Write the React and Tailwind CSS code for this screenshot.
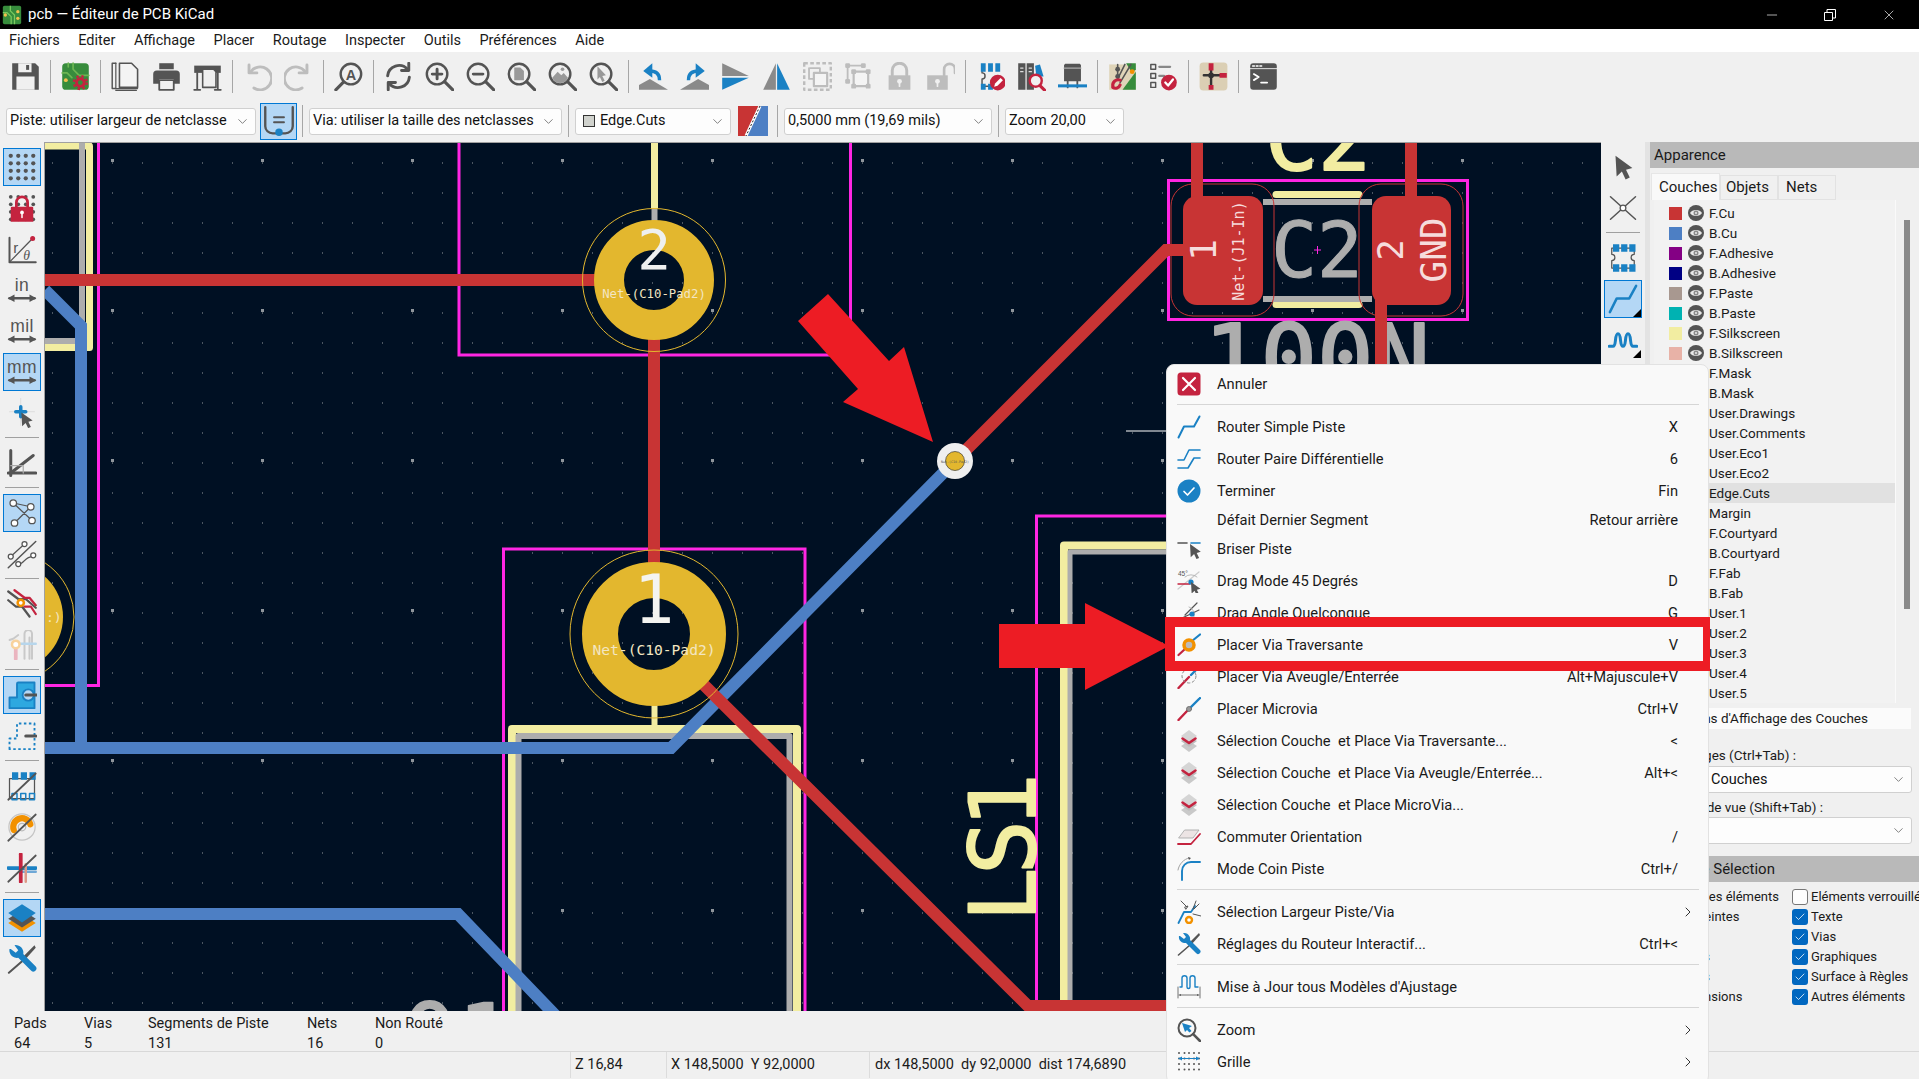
import { ChevronDown, ChevronRight, Minus, X, Check } from 'lucide-react';

const D = '#545454';
const B = '#1a81c4';
const R = '#c4233f';
const O = '#f29100';
const G = '#bdbdbd';
const MONO = 'DejaVu Sans Mono';

function Ic({ children, size = 30 }) {
  return (
    <svg width={size} height={size} viewBox="0 0 24 24" fill="none" strokeLinecap="round" strokeLinejoin="round">
      {children}
    </svg>
  );
}

const lens = (
  <>
    <circle cx="10" cy="10" r="8.5" stroke={D} strokeWidth="2" />
    <path d="M16.2 16.2 23 23" stroke={D} strokeWidth="2.6" />
  </>
);

const cursor = (x, y, s = 1, c = D) => (
  <path transform={`translate(${x} ${y}) scale(${s})`} d="M0 0 9 6.5 5.6 7.4 7.6 11.6 5.4 12.6 3.4 8.4 0.6 11z" fill={c} />
);

const dots = [3, 9, 15, 21].flatMap((x) => [3, 9, 15, 21].map((y) => [x, y]));

const icons = {
  save: (
    <>
      <path d="M1 1h19l3 3v19H1z" fill={D} />
      <path d="M6 1h11v7.500H6z" fill="#f0f0f0" />
      <path d="M12.500 2.500h2.500v4h-2.500z" fill={D} />
      <path d="M4.500 12h15v11h-15z" fill="#f0f0f0" />
    </>
  ),
  setup: (
    <>
      <rect x="1" y="1" width="22" height="22" rx="3" fill="#378c3c" />
      <path d="M10 1v5l5 5h8M1 9h4l4 4M6 1v3" stroke="#6cb552" strokeWidth="1.4" />
      <circle cx="4" cy="15" r="1.6" fill="#f2c14e" />
      <circle cx="16" cy="17" r="3.200" stroke={R} strokeWidth="2.400" fill="#378c3c" />
      <circle cx="16" cy="17" r="5.300" stroke={R} strokeWidth="2" strokeDasharray="2 2.200" strokeLinecap="butt" />
    </>
  ),
  page: (
    <>
      <path d="M1 1v21M1 1h3M1 22h3" stroke={D} strokeWidth="1.2" />
      <path d="M4 22h18M4 23.500h17" stroke={D} strokeWidth="1" />
      <path d="M7 1h10l5 5v15H7z" stroke={D} strokeWidth="1.300" fill="#f4f4f4" />
      <path d="M4 1v21" stroke={D} strokeWidth="1" />
    </>
  ),
  print: (
    <>
      <path d="M6 1h12v5H6z" fill={D} />
      <path d="M1 10a3 3 0 0 1 3-3h16a3 3 0 0 1 3 3v8h-5v-4H6v4H1z" fill={D} />
      <path d="M6 15h12v8H6z" fill="#f0f0f0" stroke={D} strokeWidth="1.500" />
    </>
  ),
  plot: (
    <>
      <path d="M1 3h22v6H1z" fill={D} />
      <path d="M3.500 9v14M20.500 9v14M1 23h5M18 23h5" stroke={D} strokeWidth="1.500" />
      <path d="M8 6h9l2 2v13H8z" fill="#f0f0f0" stroke={D} strokeWidth="1.300" />
    </>
  ),
  undo: (
    <>
      <path d="M6.500 8A9.500 9.500 0 1 1 9 21.500" stroke={G} strokeWidth="2.400" />
      <path d="M5 2.500V9h6.500" stroke={G} strokeWidth="2.400" />
    </>
  ),
  redo: (
    <g transform="translate(24) scale(-1 1)">
      <path d="M6.500 8A9.500 9.500 0 1 1 9 21.500" stroke={G} strokeWidth="2.400" />
      <path d="M5 2.500V9h6.500" stroke={G} strokeWidth="2.400" />
    </g>
  ),
  find: (
    <>
      <circle cx="14" cy="10" r="8.500" stroke={D} strokeWidth="2" />
      <path d="M8 16.500 1.500 23" stroke={D} strokeWidth="2.600" />
      <text x="14" y="14.500" fontSize="12" fontWeight="700" textAnchor="middle" fill={D} fontFamily="Liberation Sans">A</text>
    </>
  ),
  refresh: (
    <g stroke={D} strokeWidth="2.400">
      <path d="M3 11.500A9.500 9.500 0 0 1 19.500 6" />
      <path d="M14.500 7H20.500V1" />
      <path d="M21 12.500A9.500 9.500 0 0 1 4.500 18" />
      <path d="M9.500 17H3.500V23" />
    </g>
  ),
  zoomIn: (
    <>
      {lens}
      <path d="M6 10h8M10 6v8" stroke={D} strokeWidth="2.400" />
    </>
  ),
  zoomOut: (
    <>
      {lens}
      <path d="M6 10h8" stroke={D} strokeWidth="2.400" />
    </>
  ),
  zoomFit: (
    <>
      {lens}
      <path d="M6 4.500h5l3 3V15H6z" fill="#999" />
    </>
  ),
  zoomObj: (
    <>
      {lens}
      <path d="M3.500 13 8 8l3 3 2-2 3.500 4a7 7 0 0 1-13 0z" fill="#999" />
      <circle cx="12" cy="6" r="1.500" fill="#999" />
    </>
  ),
  zoomSel: (
    <>
      {lens}
      <path d="M7 3.500 14 11l-3 .5 2 4-2 1-2-4-2 2z" fill="#999" />
    </>
  ),
  rotL: (
    <>
      <path d="M0 23V19L9 14 24 23z" fill="#8a8a8a" />
      <path d="M17 15C17 10 14 7.500 9 7.500" stroke={B} strokeWidth="2.800" strokeLinecap="butt" />
      <path d="M11 1 3.500 7.500 11 13z" fill={B} />
    </>
  ),
  rotR: (
    <>
      <path d="M24 19 15 14 0 23H24z" fill="#8a8a8a" />
      <path d="M7 15C7 10 10 7.500 15 7.500" stroke={B} strokeWidth="2.800" strokeLinecap="butt" />
      <path d="M13 1 20.500 7.500 13 13z" fill={B} />
    </>
  ),
  flip: (
    <>
      <path d="M1 1 23 11.500H1z" fill="#8a8a8a" />
      <path d="M1 13H23L1 23z" fill={B} />
    </>
  ),
  mirror: (
    <>
      <path d="M11.500 1V23H1z" fill="#8a8a8a" />
      <path d="M12.500 1 23 23H12.500z" fill={B} />
    </>
  ),
  group: (
    <>
      <path d="M1 1h22v22H1z" stroke={G} strokeWidth="2" strokeDasharray="3 2" strokeLinecap="butt" />
      <path d="M6 5h8v8" stroke={G} strokeWidth="1.500" />
      <path d="M5 5v9h4" stroke={G} strokeWidth="1.500" />
      <path d="M9 9h11v11H9z" fill="#f4f4f4" stroke={G} strokeWidth="1.800" />
    </>
  ),
  ungroup: (
    <>
      <path d="M3 3h13M3 3v13" stroke={G} strokeWidth="1.500" />
      <path d="M8 8h12v12H8z" fill="#f4f4f4" stroke={G} strokeWidth="1.800" />
      {[[3, 3], [16, 3], [3, 16], [8, 8], [20, 8], [8, 20], [20, 20]].map(([x, y]) => (
        <rect key={`${x}-${y}`} x={x - 2} y={y - 2} width="4" height="4" rx="1" fill={G} />
      ))}
    </>
  ),
  lock: (
    <>
      <path d="M6 11V7a6 6 0 0 1 12 0v4" stroke={G} strokeWidth="2.400" />
      <path d="M3 11h18v12H3z" fill={G} />
      <circle cx="12" cy="16" r="2" fill="#f0f0f0" />
      <path d="M12 17v3" stroke="#f0f0f0" strokeWidth="1.400" />
    </>
  ),
  unlock: (
    <>
      <path d="M15 11V6a4.500 4.500 0 0 1 9 0v3" stroke={G} strokeWidth="2.200" />
      <path d="M1 11h17v12H1z" fill={G} />
      <circle cx="9.500" cy="16" r="2" fill="#f0f0f0" />
      <path d="M9.500 17v3" stroke="#f0f0f0" strokeWidth="1.400" />
    </>
  ),
  boardSetup: (
    <>
      <path d="M5 4v5a2 2 0 0 1 0 5v6h6" stroke={D} strokeWidth="1.200" />
      <path d="M4 1h4v7H4zM10 1h4v7h-4zM16 1h4v7h-4zM4 18h4v5H4zM10 18h4v5h-4z" fill={B} />
      <circle cx="18" cy="17" r="6.500" fill={R} />
      <path d="M15 20.500l.8-2.800 4.500-4.500 2 2-4.500 4.500z" fill="#fff" />
    </>
  ),
  library: (
    <>
      <path d="M1 1h6v22H1zM8 1h6v22H8z" fill={D} />
      <path d="M3 5h2M3 8h2M10 5h2M10 8h2" stroke="#ddd" strokeWidth="1" />
      <path d="M15 3l4-1 3 10h-6z" fill={B} />
      <circle cx="15.500" cy="15.500" r="5" fill="#f0f0f0" stroke={R} strokeWidth="2" />
      <path d="M19 19.500 23 23.500" stroke={R} strokeWidth="2.600" />
    </>
  ),
  viewer: (
    <>
      <path d="M6 1.500h12l1 1V16H5V2.500z" fill={D} />
      <path d="M5 5h14" stroke="#aaa" strokeWidth="1" />
      <path d="M8 16v5M16 16v5" stroke={D} strokeWidth="1.500" />
      <path d="M0 18.500h24v2.500H0z" fill={B} />
    </>
  ),
  update: (
    <>
      <path d="M1 2h22v21H1z" fill="#dfd4b8" />
      <path d="M12 23 23 8V23z" fill="#378c3c" />
      <path d="M15 1 23 1V6L20 9z" fill="#378c3c" />
      <circle cx="20" cy="8" r="2" fill={O} />
      <path d="M8 2v9M14 2l-6 12M19 2l-9 15" stroke={D} strokeWidth="1.300" />
      <circle cx="8" cy="6" r="2" fill={D} />
      <circle cx="8" cy="12" r="2" fill={D} />
      <path d="M4 20a4.500 4.500 0 0 1 6-5" stroke={R} strokeWidth="2.600" />
      <path d="M10 19a4 4 0 0 1-6 2" stroke={R} strokeWidth="2.600" />
    </>
  ),
  drc: (
    <>
      <path d="M1.500 2h4v4h-4zM1.500 9.500h4v4h-4zM1.500 17h4v4h-4z" stroke={D} strokeWidth="1.200" />
      <path d="M8.500 4h9M8.500 11.500h4" stroke="#888" strokeWidth="1.800" />
      <circle cx="16.500" cy="17" r="6.500" fill={R} />
      <path d="M13.500 17l2.300 2.500 4-5" stroke="#fff" strokeWidth="1.900" />
    </>
  ),
  schem: (
    <>
      <rect x="0.500" y="0.500" width="23" height="23" rx="3" fill="#dbcfb4" />
      <path d="M10 6v14M10 11h9M4 11h6" stroke="#333" strokeWidth="2" />
      <path d="M8 1h4v6H8zM8 19h4v4H8zM17 9h6v4h-6z" fill={R} />
      <circle cx="10" cy="11" r="2.400" fill="#333" />
    </>
  ),
  term: (
    <>
      <rect x="1" y="1" width="22" height="22" rx="2.500" fill={D} />
      <path d="M1 5.500h22" stroke="#fff" strokeWidth="0.700" />
      <path d="M3 3.300h1.500M6 3.300h1.500M9 3.300h1.500" stroke="#fff" strokeWidth="1.200" />
      <path d="M4 10l4 2.500L4 15M10 17h5" stroke="#fff" strokeWidth="1.500" />
    </>
  ),
  gridPts: (
    <>
      {dots.map(([x, y]) => (
        <circle key={`${x}-${y}`} cx={x} cy={y} r="1.700" fill={D} />
      ))}
    </>
  ),
  gridLock: (
    <>
      {dots.map(([x, y]) => (
        <circle key={`${x}-${y}`} cx={x} cy={y} r="1.500" fill={D} />
      ))}
      <path d="M7.500 12V7.500a4.500 4.500 0 0 1 9 0V12" stroke={R} strokeWidth="2.200" />
      <path d="M4 11h16a1 1 0 0 1 1 1v11H3V12a1 1 0 0 1 1-1z" fill={R} />
      <circle cx="12" cy="15.500" r="1.500" fill="#fff" />
      <path d="M12 16v3.500" stroke="#fff" strokeWidth="1.200" />
    </>
  ),
  polar: (
    <>
      <path d="M2 3v19.500h21" stroke={D} strokeWidth="1.600" />
      <path d="M2 22.500 20 4" stroke={D} strokeWidth="1" />
      <circle cx="20.500" cy="3.500" r="2" fill={R} />
      <text x="5" y="15" fontSize="12" fill={D} fontFamily="Liberation Sans">r</text>
      <text x="13" y="21" fontSize="11" fontStyle="italic" fill={D} fontFamily="Liberation Serif">θ</text>
    </>
  ),
  axes: (
    <>
      <path d="M3 2v20M1 20h22" stroke={D} strokeWidth="2.400" />
      <path d="M3 20 21 6" stroke={D} strokeWidth="2.400" />
      <path d="M3 14h10v6" stroke="#aaa" strokeWidth="1" />
    </>
  ),
  crosshair: (
    <>
      <path d="M2 11h20M11 0v22" stroke="#ddd" strokeWidth="0.800" />
      <path d="M7 11h8M11 7v8" stroke={B} strokeWidth="2.800" />
      {cursor(11.500, 11.500, 1)}
    </>
  ),
  ratsnest: (
    <>
      <path d="M5 4 19 7M5 4 20 18M19 7 6 20" stroke={D} strokeWidth="1" />
      {[[5, 4], [19, 7], [20, 18], [6, 20]].map(([x, y]) => (
        <circle key={x} cx={x} cy={y} r="2.600" fill="#fff" stroke={D} strokeWidth="1" />
      ))}
    </>
  ),
  curved: (
    <>
      <path d="M1 23 23 2" stroke={D} strokeWidth="1.200" />
      <path d="M3 14 14 4" stroke={D} strokeWidth="1" />
      <path d="M9 20c6 0 4-6 12-6" stroke={D} strokeWidth="1" />
      {[[3, 14], [14, 4], [9, 20], [21, 13]].map(([x, y]) => (
        <circle key={x} cx={x} cy={y} r="2" fill="#fff" stroke={D} strokeWidth="1" />
      ))}
    </>
  ),
  netColors: (
    <>
      <path d="M1 2 9 8h6l8 7" stroke={D} strokeWidth="1.800" />
      <path d="M6 1l8 6h4l5 6" stroke={R} strokeWidth="1.800" />
      <path d="M1 9 7 14h5l6 8" stroke={D} strokeWidth="1.800" />
      <path d="M14 14h5l4 6" stroke={R} strokeWidth="1.800" />
      <circle cx="11" cy="11" r="2.500" fill="#fff" stroke={O} strokeWidth="2" />
    </>
  ),
  viasOn: (
    <>
      <path d="M14 23V3a3 3 0 0 1 6 0v20M18 23V6" stroke="#c9c9c9" strokeWidth="1.600" />
      <path d="M2 8l3-1 4-3" stroke="#c9c9c9" strokeWidth="1.500" />
      <path d="M10 11h13" stroke="#b7d6ec" strokeWidth="2" />
      <path d="M7 14v9" stroke="#eab4bf" strokeWidth="3" />
      <circle cx="7" cy="11.500" r="3" fill="#fff" stroke="#f8d29c" strokeWidth="2" />
    </>
  ),
  padFill: (
    <>
      <path d="M2 22.500V14h6V3a1 1 0 0 1 1-1h13v20.500z" fill="#2ea8e0" stroke={B} strokeWidth="1.500" />
      <circle cx="17" cy="12" r="4.500" fill="#b4d7f5" stroke={B} strokeWidth="1.500" />
      <path d="M15 12h9" stroke={D} strokeWidth="2.400" />
    </>
  ),
  padOut: (
    <>
      <path d="M2 22.500V14h6V2h14v20.500z" stroke={B} strokeWidth="1.500" strokeDasharray="2 2" strokeLinecap="butt" />
      <path d="M15 12h8" stroke={D} strokeWidth="2.400" />
    </>
  ),
  fpHidden: (
    <>
      <path d="M2 6h20v16H2z" stroke={D} strokeWidth="1" />
      <path d="M4 1h5v6H4zM11 1h5v6h-5zM18 1h5v6h-5z" fill={B} />
      <path d="M4 18h4v5H4zM11 18h4v5h-4zM18 18h4v5h-4z" stroke={B} strokeWidth="1.200" />
      <path d="M1 23 23 2" stroke={D} strokeWidth="1.400" />
    </>
  ),
  viaHidden: (
    <>
      <circle cx="12" cy="12" r="10.500" stroke="#c5c5c5" strokeWidth="1" />
      <circle cx="12" cy="12" r="7" stroke={O} strokeWidth="5" fill="none" strokeDasharray="22 40" transform="rotate(-200 12 12)" />
      <circle cx="12" cy="12" r="3" stroke="#bbb" strokeWidth="1" />
      <path d="M1 23 23 2" stroke={D} strokeWidth="1.400" />
    </>
  ),
  traceHidden: (
    <>
      <path d="M1 12h22" stroke={B} strokeWidth="3" />
      <path d="M12 15h11" stroke="#6fa8d6" strokeWidth="2" />
      <path d="M11 1v22" stroke={R} strokeWidth="3" />
      <path d="M15 9v14" stroke="#d98" strokeWidth="2" />
      <path d="M1 23 23 2" stroke={D} strokeWidth="1.400" />
    </>
  ),
  layers: (
    <>
      <path d="M12 9 23 16 12 23 1 16z" fill={O} />
      <path d="M12 5.500 23 12.500 12 19.500 1 12.500z" fill={D} />
      <path d="M12 1 23 8 12 15.500 1 8z" fill={B} />
    </>
  ),
  tools: (
    <>
      <path d="M22 1l1 2-9 10-2-2z" fill={D} />
      <path d="M13 13 1.500 23" stroke={D} strokeWidth="1.600" />
      <path d="M3 4l4 3 2-2-3-4a6 6 0 0 1 7 7l10 10a2.500 2.500 0 0 1-4 3L9 11a6 6 0 0 1-7-7z" fill={B} />
    </>
  ),
  select: cursor(6, 3, 1.500),
  cross: (
    <>
      <path d="M2 3 22 21M22 3 2 21" stroke={D} strokeWidth="1.200" />
      <circle cx="12" cy="12" r="2.300" fill="#fff" stroke={D} strokeWidth="1" />
    </>
  ),
  footprint: (
    <>
      <path d="M3 4h18v5a2 2 0 0 0 0 5v6H3v-6a2 2 0 0 0 0-5z" stroke={D} strokeWidth="1" />
      <path d="M4 1h5v6H4zM10.500 1h5v6h-5zM17 1h5v6h-5zM4 17h5v6H4zM10.500 17h5v6h-5zM17 17h5v6h-5z" fill={B} />
    </>
  ),
  route: <path d="M1.500 22.500 7 11.500H17L22.500 1.500" stroke={B} strokeWidth="2" />,
  tune: <path d="M1 17h3c3 0 1-10 4-10s1 10 4 10 1-10 4-10 1 10 4 10h3" stroke={B} strokeWidth="2.400" />,
  diff: (
    <g stroke={B} strokeWidth="1.600">
      <path d="M1 13h6l5-10h11" />
      <path d="M1 21h10l6-10h6" />
    </g>
  ),
  cancel: (
    <>
      <rect x="0.500" y="0.500" width="23" height="23" rx="3.500" fill={R} />
      <path d="M6 6 18 18M18 6 6 18" stroke="#fff" strokeWidth="2.200" />
    </>
  ),
  done: (
    <>
      <circle cx="12" cy="12" r="11.500" fill={B} />
      <path d="M7 12.500 10.500 16 17 9" stroke="#fff" strokeWidth="1.700" />
    </>
  ),
  breakTrack: (
    <>
      <path d="M1 6h9" stroke={D} strokeWidth="1.600" />
      <path d="M14 6h9" stroke={B} strokeWidth="1.600" />
      {cursor(13, 7, 1.200)}
    </>
  ),
  drag45: (
    <>
      <text x="1" y="7" fontSize="6.500" fill={D} fontFamily="Liberation Sans">45°</text>
      <path d="M1 20 22 3" stroke="#ccc" strokeWidth="1.200" />
      <path d="M1 15h12" stroke={R} strokeWidth="1.400" />
      <path d="M8 8a9 9 0 0 1 12 0" stroke="#aaa" strokeWidth="0.800" />
      <circle cx="14" cy="13" r="2.600" fill={B} />
      {cursor(14, 13, 1.050)}
    </>
  ),
  dragAny: (
    <>
      <path d="M3 18 22 9M8 14 20 2" stroke={D} strokeWidth="1.200" />
      <path d="M12 6a8 8 0 0 1 4 12" stroke="#aaa" strokeWidth="0.800" />
      <circle cx="15" cy="13" r="2.600" fill={B} />
    </>
  ),
  via: (
    <>
      <path d="M1.500 22 8 16" stroke={R} strokeWidth="2.200" />
      <path d="M15 8 23 1.500" stroke={B} strokeWidth="2.200" />
      <circle cx="12" cy="12" r="5" fill="#bbb" stroke={O} strokeWidth="3.500" />
    </>
  ),
  blind: (
    <>
      <path d="M1.500 23 12 12" stroke={R} strokeWidth="2.400" />
      <path d="M14 10 23 1" stroke={B} strokeWidth="2.400" />
      <circle cx="12" cy="11" r="7" stroke="#888" strokeWidth="1" strokeDasharray="2.500 2.500" />
    </>
  ),
  micro: (
    <>
      <path d="M1.500 23 11 13" stroke={R} strokeWidth="2.400" />
      <path d="M13 11 23 1" stroke={B} strokeWidth="2.400" />
      <circle cx="12" cy="12" r="2.500" fill="#999" stroke="#666" strokeWidth="0.800" />
    </>
  ),
  layerVia: (
    <>
      <path d="M12 12 20 17 12 23 4 17z" fill="#c9c9c9" />
      <path d="M12 7 20 12 12 18 4 12z" fill="#bdbdbd" />
      <path d="M12 1 20 7 12 13 4 7z" fill="#d5d5d5" />
      <path d="M5.500 9.500 12 14l6.500-4.500" stroke={R} strokeWidth="2.600" />
    </>
  ),
  orient: (
    <>
      <path d="M8 5h14L16 13H2z" fill="#ece4e4" stroke="#aaa" strokeWidth="0.900" />
      <path d="M1 19h13L23 9" stroke={R} strokeWidth="1.800" />
    </>
  ),
  corner: (
    <>
      <path d="M5 23V14C5 9 9 5 14 5h9" stroke={B} strokeWidth="1.900" />
      <path d="M1 13C2 7 7 2 12 1" stroke="#999" strokeWidth="0.900" />
      <path d="M11 0l3 1-2 2z" fill={D} />
    </>
  ),
  widths: (
    <>
      <path d="M1.500 23 7 12h7l4-6" stroke={B} strokeWidth="1.800" />
      <path d="M4 1l6 6M22 4l-5 5M8 7l3-1-2 3zM19 1l-3 8" stroke={D} strokeWidth="1" />
      <path d="M16 14l8 2" stroke={D} strokeWidth="1" />
      <circle cx="12" cy="20" r="3" fill="#fff" stroke={O} strokeWidth="2.400" />
    </>
  ),
  tuneAll: (
    <>
      <path d="M3 15h2V6c0-3 5-3 5 0v9c0 2 3 2 3 0V6c0-3 5-3 5 0v9h3" stroke={B} strokeWidth="1.400" transform="translate(0 -3)" />
      <path d="M1 12v11M23 12v11M2 20h20" stroke={D} strokeWidth="0.800" />
      <path d="M2 20l2-1v2zM22 20l-2-1v2z" fill={D} />
    </>
  ),
  zoomMenu: (
    <>
      {lens}
      <path d="M5 5 15 8l-3 2 2.500 3-2 1.500L10 12l-2 2z" fill={B} />
    </>
  ),
  gridMenu: (
    <>
      {[2, 7.500, 13, 18.500].flatMap((y) => [2, 7.500, 12, 17, 22].map((x) => (
        <circle key={`${x}-${y}`} cx={x} cy={y + 1} r="1" fill={D} />
      )))}
      <path d="M3 8.500h18" stroke={B} strokeWidth="1.200" />
      <path d="M1 8.500l4-2v4zM23 8.500l-4-2v4z" fill={B} />
    </>
  ),
  trackMode: (
    <>
      <path d="M1 1v16a6 6 0 0 0 6 6h10a6 6 0 0 0 6-6V1" stroke={D} strokeWidth="1.900" transform="scale(1 0.950)" />
      <path d="M8 9h8M8 13h8" stroke={D} strokeWidth="1.500" />
      <circle cx="12" cy="21" r="3" fill={B} />
    </>
  ),
};

const unitIcon = (label) => (
  <>
    <text x="12" y="12.500" fontSize="14" textAnchor="middle" fill={D} fontFamily="Liberation Sans" letterSpacing="0.300">{label}</text>
    <path d="M2 18.500h20" stroke={D} strokeWidth="2" />
    <path d="M0.500 18.500 6 15.500v6zM23.500 18.500 18 15.500v6z" fill={D} />
  </>
);

const menuBar = ['Fichiers', 'Editer', 'Affichage', 'Placer', 'Routage', 'Inspecter', 'Outils', 'Préférences', 'Aide'];

const topTools = [
  'save', '|', 'setup', '|', 'page', 'print', 'plot', '|', 'undo', 'redo', '|', 'find', '|', 'refresh', 'zoomIn', 'zoomOut',
  'zoomFit', 'zoomObj', 'zoomSel', '|', 'rotL', 'rotR', 'flip', 'mirror', 'group', 'ungroup', 'lock', 'unlock', '|',
  'boardSetup', 'library', 'viewer', '|', 'update', 'drc', '|', 'schem', '|', 'term',
];

const leftTools = [
  { i: icons.gridPts, on: true }, { i: icons.gridLock }, { i: icons.polar }, { i: unitIcon('in') }, { i: unitIcon('mil') },
  { i: unitIcon('mm'), on: true }, { i: icons.crosshair }, null, { i: icons.axes }, null, { i: icons.ratsnest, on: true },
  { i: icons.curved }, null, { i: icons.netColors }, { i: icons.viasOn }, null, { i: icons.padFill, on: true }, { i: icons.padOut },
  null, { i: icons.fpHidden }, { i: icons.viaHidden }, { i: icons.traceHidden }, null, { i: icons.layers, on: true }, { i: icons.tools },
];

const rightTools = [
  { i: icons.select }, { i: icons.cross }, null, { i: icons.footprint }, { i: icons.route, on: true, more: true }, { i: icons.tune, more: true },
];

const layers = [
  ['F.Cu', '#c83434'], ['B.Cu', '#4d7fc4'], ['F.Adhesive', '#840084'], ['B.Adhesive', '#000084'], ['F.Paste', '#a89890'],
  ['B.Paste', '#00b2b2'], ['F.Silkscreen', '#f2eda1'], ['B.Silkscreen', '#e8b2a7'], ['F.Mask', '#d864ff'], ['B.Mask', '#02ffee'],
  ['User.Drawings', '#c2c2c2'], ['User.Comments', '#5994dc'], ['User.Eco1', '#b4dbd2'], ['User.Eco2', '#d8c852'], ['Edge.Cuts', '#d0d2cd'],
  ['Margin', '#ff26e2'], ['F.Courtyard', '#ff26e2'], ['B.Courtyard', '#26e9ff'], ['F.Fab', '#afafaf'], ['B.Fab', '#585d84'],
  ['User.1', '#c2c2c2'], ['User.2', '#c2c2c2'], ['User.3', '#c2c2c2'], ['User.4', '#c2c2c2'], ['User.5', '#c2c2c2'],
];

const menuRows = [
  { t: 'Annuler', i: icons.cancel }, '-',
  { t: 'Router Simple Piste', i: icons.route, k: 'X' },
  { t: 'Router Paire Différentielle', i: icons.diff, k: '6' },
  { t: 'Terminer', i: icons.done, k: 'Fin' },
  { t: 'Défait Dernier Segment', k: 'Retour arrière', small: true },
  { t: 'Briser Piste', i: icons.breakTrack },
  { t: 'Drag Mode 45 Degrés', i: icons.drag45, k: 'D' },
  { t: 'Drag Angle Quelconque', i: icons.dragAny, k: 'G' },
  { t: 'Placer Via Traversante', i: icons.via, k: 'V' },
  { t: 'Placer Via Aveugle/Enterrée', i: icons.blind, k: 'Alt+Majuscule+V' },
  { t: 'Placer Microvia', i: icons.micro, k: 'Ctrl+V' },
  { t: 'Sélection Couche  et Place Via Traversante...', i: icons.layerVia, k: '<' },
  { t: 'Sélection Couche  et Place Via Aveugle/Enterrée...', i: icons.layerVia, k: 'Alt+<' },
  { t: 'Sélection Couche  et Place MicroVia...', i: icons.layerVia },
  { t: 'Commuter Orientation', i: icons.orient, k: '/' },
  { t: 'Mode Coin Piste', i: icons.corner, k: 'Ctrl+/' }, '-',
  { t: 'Sélection Largeur Piste/Via', i: icons.widths, sub: true },
  { t: 'Réglages du Routeur Interactif...', i: icons.tools, k: 'Ctrl+<' }, '-',
  { t: "Mise à Jour tous Modèles d'Ajustage", i: icons.tuneAll }, '-',
  { t: 'Zoom', i: icons.zoomMenu, sub: true },
  { t: 'Grille', i: icons.gridMenu, sub: true },
];

const filterRows = [
  ['Tous les éléments', false, 'Eléments verrouillés', false],
  ['Empreintes', true, 'Texte', true],
  ['Pads', true, 'Vias', true],
  ['Pistes', true, 'Graphiques', true],
  ['Zones', true, 'Surface à Règles', true],
  ['Dimensions', true, 'Autres éléments', true],
];

const stats = [
  ['Pads', '64', 'w-[70px]'],
  ['Vias', '5', 'w-[64px]'],
  ['Segments de Piste', '131', 'w-[159px]'],
  ['Nets', '16', 'w-[68px]'],
  ['Non Routé', '0', 'w-[90px]'],
];

function Board() {
  return (
    <svg viewBox="45 143 1556 868" className="block w-full h-full">
      <defs>
        <pattern id="minor" x="412" y="732" width="30" height="30" patternUnits="userSpaceOnUse">
          <rect width="1" height="2" fill="#4b5662" />
        </pattern>
        <pattern id="major" x="111" y="309" width="150" height="150" patternUnits="userSpaceOnUse">
          <rect width="3" height="3" fill="#8f959b" />
        </pattern>
      </defs>
      <rect x="45" y="143" width="1556" height="868" fill="#001023" />
      <rect x="45" y="143" width="1556" height="868" fill="url(#minor)" />
      <rect x="45" y="143" width="1556" height="868" fill="url(#major)" />

      {/* courtyards */}
      <g fill="none" stroke="#ff26e2" strokeWidth="3">
        <path d="M98.500 143V685.500H45" strokeWidth="3" />
        <path d="M459 143V355H850.500V143" />
        <path d="M503.500 1011V549H805V1011" />
        <path d="M1036.500 1011V516H1166" />
        <rect x="1168.500" y="180.500" width="299" height="139" />
      </g>

      {/* silkscreen and fab */}
      <g fill="none" strokeLinejoin="round">
        <path d="M45 146H89.500V347.500H45" stroke="#f2eda1" strokeWidth="7" />
        <path d="M82 143V341H45" stroke="#adadad" strokeWidth="6" />
        <path d="M654.500 143V208" stroke="#f2eda1" strokeWidth="7" />
        <path d="M654.500 208V222" stroke="#adadad" strokeWidth="6" />
        <path d="M512 1011V729H797V1011" stroke="#f2eda1" strokeWidth="8" />
        <path d="M654.500 706V729" stroke="#f2eda1" strokeWidth="6" />
        <path d="M654.500 690V706" stroke="#adadad" strokeWidth="6" />
        <path d="M518.500 1011V736H789.500V1011" stroke="#adadad" strokeWidth="6" />
        <path d="M1064 1011V545.500H1166" stroke="#f2eda1" strokeWidth="8" />
        <path d="M1070 1011V552H1166" stroke="#adadad" strokeWidth="5" />
        <path d="M1276 194.500H1359" stroke="#f2eda1" strokeWidth="7" strokeLinecap="round" />
        <path d="M1276 304.500H1359" stroke="#f2eda1" strokeWidth="7" strokeLinecap="round" />
        <path d="M1263 202H1372M1263 299H1372" stroke="#adadad" strokeWidth="6" />
      </g>
      <g fontFamily={MONO} strokeLinejoin="round">
        <text x="1318" y="170" fontSize="88" fill="#f2eda1" stroke="#f2eda1" strokeWidth="2" textAnchor="middle">C2</text>
        <text x="1035" y="851" fontSize="90" fill="#f2eda1" stroke="#f2eda1" strokeWidth="2" textAnchor="middle" letterSpacing="-7" transform="rotate(-90 1035 851)">LS1</text>
        <text x="402" y="1070" fontSize="92" fill="#adadad" stroke="#adadad" strokeWidth="1.500">01</text>
        <text x="1317" y="277" fontSize="76" fill="#adadad" stroke="#adadad" strokeWidth="1" textAnchor="middle">C2</text>
        <text x="1317" y="392" fontSize="94" fill="#adadad" stroke="#adadad" strokeWidth="2" textAnchor="middle">100N</text>
      </g>
      <path d="M1314 250h7M1317.500 246v8" stroke="#ff26e2" strokeWidth="1" />

      {/* copper */}
      <g fill="none" stroke="#4d7fc4" strokeWidth="12" strokeLinejoin="miter">
        <path d="M45 290 81 326V748" />
        <path d="M45 748H671L955 461" />
        <path d="M45 914H458L556 1016" />
      </g>
      <g fill="none" stroke="#c83434" strokeWidth="12">
        <path d="M45 280H600" />
        <path d="M654 335V570" />
        <path d="M704 685 1028 1006H1170" />
        <path d="M955 461 1166 250H1190" />
        <path d="M1197 143V200M1411 143V200M1381 300V364" />
      </g>

      {/* pads */}
      <g fill="#c83434">
        <rect x="1183" y="196" width="80" height="109" rx="14" />
        <rect x="1372" y="196" width="79" height="109" rx="14" />
      </g>
      <g fill="none" stroke="#c83434" strokeWidth="1">
        <rect x="1171" y="184" width="103" height="132" rx="22" />
        <rect x="1359" y="184" width="104" height="132" rx="22" />
      </g>
      <g fill="#f6dcdc" fontFamily={MONO} textAnchor="middle">
        <text x="1216" y="250" fontSize="36" transform="rotate(-90 1216 250)" dominantBaseline="auto">1</text>
        <text x="1244" y="251" fontSize="15" transform="rotate(-90 1244 251)">Net-(J1-In)</text>
        <text x="1403" y="250" fontSize="36" transform="rotate(-90 1403 250)">2</text>
        <text x="1446" y="250" fontSize="36" transform="rotate(-90 1446 250)">GND</text>
      </g>

      <circle cx="654" cy="280" r="71.500" fill="none" stroke="#e3b72e" strokeWidth="1" />
      <circle cx="654" cy="280" r="45" fill="none" stroke="#e3b72e" strokeWidth="30" />
      <circle cx="654" cy="634" r="84" fill="none" stroke="#e3b72e" strokeWidth="1" />
      <circle cx="654" cy="634" r="54" fill="none" stroke="#e3b72e" strokeWidth="36" />
      <circle cx="9" cy="617" r="65" fill="none" stroke="#e3b72e" strokeWidth="1" />
      <circle cx="9" cy="617" r="54" fill="#e3b72e" />
      <text x="46" y="622" fontFamily={MONO} fontSize="13" fill="#f4e6c0">:)</text>

      <g fontFamily={MONO} textAnchor="middle">
        <text x="654" y="269" fontSize="56" fill="#eef0f0">2</text>
        <text x="654" y="298" fontSize="12.300" fill="#f3e6c2">Net-(C10-Pad2)</text>
        <text x="654" y="623" fontSize="68" fill="#f4f4f0">1</text>
        <text x="654" y="655" fontSize="14.600" fill="#f3e6c2">Net-(C10-Pad2)</text>
      </g>

      {/* via under the cursor */}
      <circle cx="955" cy="461" r="18" fill="#efefef" />
      <circle cx="955" cy="461" r="9.500" fill="#e3b72e" stroke="#222" strokeWidth="0.600" />
      <text x="955" y="462.500" fontFamily={MONO} fontSize="3.300" fill="#555" textAnchor="middle">Net-(C10-Pad2)</text>

      <path d="M1126 431H1166" stroke="#fff" strokeWidth="1" />

      {/* annotation */}
      <path d="M798 321 828 294 889 361 904 347 933 442 843 402 858 389z" fill="#ed1c24" />
    </svg>
  );
}

function ToolBtn({ tool, size = 30 }) {
  return (
    <div className="relative h-[41px] w-full flex items-center justify-center">
      {tool.on && <div className="absolute left-[3px] right-[3px] top-[1.500px] bottom-[1.500px] bg-[#b4d7f5] border border-[#0078d4]" />}
      <div className="relative flex">
        <Ic size={size}>{tool.i}</Ic>
      </div>
      {tool.more && <div className="absolute right-[4px] bottom-[2px] w-0 h-0 border-l-[8px] border-l-transparent border-b-[8px] border-b-black" />}
    </div>
  );
}

function ToolColumn({ tools, className }) {
  return (
    <div className={`flex flex-col pt-1 bg-[#f0f0f0] ${className}`}>
      {tools.map((t, n) =>
        t ? (
          <ToolBtn key={n} tool={t} />
        ) : (
          <div key={n} className="h-[9px] flex items-center justify-center">
            <div className="w-[34px] h-px bg-[#a0a0a0]" />
          </div>
        )
      )}
    </div>
  );
}

function Combo({ text, className, box }) {
  return (
    <div className={`h-[27px] flex items-center bg-[#fdfdfd] border border-[#d0d0d0] rounded-[3px] ${className}`}>
      {box && <span className="w-[12px] h-[12px] ml-[7px] mr-[2px] bg-[#d0d2cd] border border-[#333] shrink-0" />}
      <span className="flex-1 pl-[3px] whitespace-pre text-[14.500px] text-[#111] truncate">{text}</span>
      <ChevronDown className="w-[15px] h-[15px] mr-[5px] text-[#666]" strokeWidth={1.300} />
    </div>
  );
}

function VSep() {
  return <div className="w-px h-[32px] bg-[#a6a6a6]" />;
}

function ContextMenu() {
  return (
    <div className="absolute left-[1166px] top-[364px] w-[543px] h-[720px] pt-[3px] bg-[#f9f9f9] rounded-lg border border-[#e2e2e2] text-[14.700px] text-[#1a1a1a]">
      {menuRows.map((r, n) =>
        r === '-' ? (
          <div key={n} className="h-[11px] pt-[4px] pl-[10px] pr-[9px]">
            <div className="h-px bg-[#d6d6d6]" />
          </div>
        ) : (
          <div key={n} className={`flex items-center pl-[10px] ${r.small ? 'h-[26px]' : 'h-[32px]'}`}>
            <span className="w-[24px] h-[24px] flex shrink-0">{r.i && <Ic size={24}>{r.i}</Ic>}</span>
            <span className="ml-[16px] flex-1 whitespace-pre">{r.t}</span>
            {r.k && <span className="mr-[30px]">{r.k}</span>}
            {r.sub && <ChevronRight className="w-4 h-4 mr-[12px] text-[#333]" strokeWidth={1.500} />}
          </div>
        )
      )}
    </div>
  );
}

function Eye() {
  return (
    <svg width="16" height="16" viewBox="0 0 16 16" className="shrink-0">
      <circle cx="8" cy="8" r="8" fill={D} />
      <path d="M2 8c2-4 10-4 12 0-2 4-10 4-12 0z" fill="#e8e8e8" />
      <circle cx="8" cy="8" r="2.500" fill="#8a8a8a" />
      <circle cx="8" cy="8" r="1" fill="#e8e8e8" />
    </svg>
  );
}

function Box({ on }) {
  return on ? (
    <span className="w-[16px] h-[16px] rounded-[3px] bg-[#0067c0] flex items-center justify-center shrink-0">
      <Check className="w-3 h-3 text-white" strokeWidth={1.500} />
    </span>
  ) : (
    <span className="w-[16px] h-[16px] rounded-[3px] bg-[#fdfdfd] border border-[#777] shrink-0" />
  );
}

function SidePanel() {
  return (
    <div className="w-[269px] flex flex-col bg-[#f0f0f0] text-[13.500px] text-[#1a1a1a] overflow-hidden">
      <div className="h-[26px] flex items-center pl-1 bg-[#b9b9b9] text-[15px] shrink-0">Apparence</div>
      <div className="flex h-[27px] mt-[5px] ml-px text-[15px] shrink-0">
        <div className="w-[69px] flex items-center pl-[7px] bg-[#f9f9f9] border-t border-x border-[#e6e6e6]">Couches</div>
        <div className="w-[58px] flex items-center pl-[5px] mt-[2px] border border-[#e2e2e2]">Objets</div>
        <div className="w-[58px] flex items-center pl-[7px] mt-[2px] border border-[#e2e2e2]">Nets</div>
      </div>
      <div className="flex h-[503px] ml-1 shrink-0">
        <div className="w-[241px] pt-[3px] bg-[#f2f2f2]">
          {layers.map(([name, color]) => (
            <div key={name} className={`h-[20px] flex items-center pl-[15px] ${name === 'Edge.Cuts' ? 'bg-[#e1e1e1]' : ''}`}>
              <span className="w-[13px] h-[13px] shrink-0" style={{ backgroundColor: color }} />
              <span className="ml-[6px] flex">
                <Eye />
              </span>
              <span className="ml-[5px]">{name}</span>
            </div>
          ))}
        </div>
        <div className="w-[21px] pt-[20px] pl-[8px] border-l border-[#fafafa]">
          <div className="w-[6px] h-[389px] bg-[#8a8a8a]" />
        </div>
      </div>
      <div className="h-[21px] mt-[5px] mr-[8px] ml-[4px] bg-[#fbfbfb] flex items-center justify-end pr-[43px] shrink-0 whitespace-pre">
        Options d'Affichage des Couches
      </div>
      <div className="h-[20px] mt-[16px] pr-[123px] flex items-center justify-end shrink-0 whitespace-pre">Préréglages (Ctrl+Tab) :</div>
      <Combo text="Couches" className="ml-[5px] mr-[7px] pl-[52px] shrink-0 mt-[1px]" />
      <div className="h-[20px] mt-[4px] pr-[96px] flex items-center justify-end shrink-0 whitespace-pre">Points de vue (Shift+Tab) :</div>
      <Combo text="" className="ml-[5px] mr-[7px] shrink-0" />
      <div className="h-[26px] mt-[12px] flex items-center pl-[6px] bg-[#b9b9b9] text-[15px] shrink-0">Filtre de Sélection</div>
      <div className="flex flex-col mt-[5px] pl-[4px] whitespace-nowrap text-[13px]">
        {filterRows.map(([a, aOn, b, bOn]) => (
          <div key={a} className="h-[20px] flex items-center">
            <span className="w-[138px] shrink-0 flex items-center gap-1">
              <Box on={aOn} />
              <span>{a}</span>
            </span>
            <Box on={bOn} />
            <span className="ml-[3px]">{b}</span>
          </div>
        ))}
      </div>
    </div>
  );
}

export default function App() {
  return (
    <div className="relative w-[1919px] h-[1079px] overflow-hidden flex flex-col bg-[#f0f0f0] font-[family-name:Roboto,sans-serif] text-[#1a1a1a]">
      {/* Title bar */}
      <div className="h-[29px] shrink-0 bg-black text-white flex items-center pl-[2px] text-[15px]">
        <svg width="20" height="20" viewBox="0 0 24 24" className="shrink-0">
          <rect x="1" y="1" width="22" height="22" rx="2" fill="#378c3c" />
          <path d="M10 1v6l5 5v11M1 9h5l5 5v9" stroke="#7ccb5f" strokeWidth="1.500" fill="none" />
          <circle cx="4" cy="12" r="2" fill="#f2c14e" />
          <circle cx="19" cy="8" r="2" fill="#f2c14e" />
          <circle cx="19" cy="16" r="2" fill="#f2c14e" />
        </svg>
        <span className="ml-[6px]">pcb — Éditeur de PCB KiCad</span>
        <div className="ml-auto flex items-center">
          <span className="w-[58px] flex justify-center"><Minus className="w-4 h-4" strokeWidth={1} /></span>
          <span className="w-[58px] flex justify-center">
            <svg width="12" height="12" viewBox="0 0 12 12" fill="none" stroke="#fff">
              <path d="M.5 3.500h8v8h-8zM3 3.500V.5h8.500V9H8.500" />
            </svg>
          </span>
          <span className="w-[60px] flex justify-center"><X className="w-4 h-4" strokeWidth={1} /></span>
        </div>
      </div>

      {/* Menu bar */}
      <div className="h-[23px] shrink-0 bg-white flex items-center text-[14.500px] pl-[9px] gap-[18.500px] text-[#1a1a1a]">
        {menuBar.map((m) => (
          <span key={m}>{m}</span>
        ))}
      </div>

      {/* Main toolbar */}
      <div className="h-[48px] shrink-0 flex items-start pt-[8px] pl-[4.500px] bg-[#f0f0f0]">
        {topTools.map((t, n) =>
          t === '|' ? (
            <div key={n} className="w-[9px] h-[33px] flex justify-center">
              <div className="w-px h-full bg-[#a6a6a6]" />
            </div>
          ) : (
            <div key={n} className="w-[41px] h-[33px] flex items-center justify-center">
              <Ic size={29}>{icons[t]}</Ic>
            </div>
          )
        )}
      </div>

      {/* Options toolbar */}
      <div className="h-[42px] shrink-0 flex items-center pl-[6px] bg-[#f0f0f0]">
        <Combo text="Piste: utiliser largeur de netclasse" className="w-[250px]" />
        <div className="ml-[4px] w-[37px] h-[37px] bg-[#b4d7f5] border border-[#0078d4] flex items-center justify-center">
          <Ic size={30}>{icons.trackMode}</Ic>
        </div>
        <div className="ml-[5px] mr-[6px]"><VSep /></div>
        <Combo text="Via: utiliser la taille des netclasses" className="w-[253px]" />
        <div className="ml-[6px] mr-[6px]"><VSep /></div>
        <Combo box text="Edge.Cuts" className="w-[156px]" />
        <svg width="30" height="30" viewBox="0 0 30 30" className="ml-[7px] shrink-0">
          <path d="M0 0h22L8 30H0z" fill="#c83434" />
          <path d="M22 0h8v30H8z" fill="#4d7fc4" />
          <path d="M22 0 8 30" stroke="#fff" strokeWidth="3" />
          <path d="M22 0 8 30" stroke="#222" strokeWidth="1" strokeDasharray="2 2" />
        </svg>
        <div className="ml-[9px] mr-[6px]"><VSep /></div>
        <Combo text="0,5000 mm (19,69 mils)" className="w-[208px]" />
        <div className="ml-[6px] mr-[6px]"><VSep /></div>
        <Combo text="Zoom 20,00" className="w-[119px]" />
      </div>

      {/* Work area */}
      <div className="h-[869px] shrink-0 flex">
        <ToolColumn tools={leftTools} className="w-[44px]" />
        <div className="w-[1557px] border-l border-t border-[#a0a0a0]">
          <Board />
        </div>
        <ToolColumn tools={rightTools} className="w-[44px]" />
        <div className="w-[5px] bg-[#e3e3e3]" />
        <SidePanel />
      </div>

      {/* Message panel */}
      <div className="h-[41px] shrink-0 bg-[#f0f0f0] border-b border-[#d8d8d8] flex pl-[14px] pt-px text-[14.500px]">
        {stats.map(([a, b, w]) => (
          <div key={a} className={`flex flex-col pt-[2px] ${w}`}>
            <span className="h-[20px] leading-[20px]">{a}</span>
            <span className="h-[20px] leading-[20px]">{b}</span>
          </div>
        ))}
      </div>

      {/* Status bar */}
      <div className="h-[26px] shrink-0 flex text-[14.500px]">
        <div className="w-[570px]" />
        <div className="w-[96px] pl-[4px] flex items-center border-l border-[#dcdcdc]">Z 16,84</div>
        <div className="w-[203px] pl-[4px] flex items-center border-l border-[#dcdcdc] whitespace-pre">X 148,5000  Y 92,0000</div>
        <div className="flex-1 pl-[5px] flex items-center border-l border-[#dcdcdc] whitespace-pre">dx 148,5000  dy 92,0000  dist 174,6890</div>
      </div>

      <ContextMenu />

      {/* Annotations on top of the menu */}
      <div className="absolute left-[1165px] top-[617px] w-[545px] h-[54px] border-y-[10px] border-l-[10px] border-r-[7px] border-[#ed1c24]" />
      <svg className="absolute left-[999px] top-[603px]" width="172" height="88" viewBox="0 0 172 88">
        <path d="M0 21H86V0L170 43 86 87V65H0z" fill="#ed1c24" />
      </svg>
    </div>
  );
}
